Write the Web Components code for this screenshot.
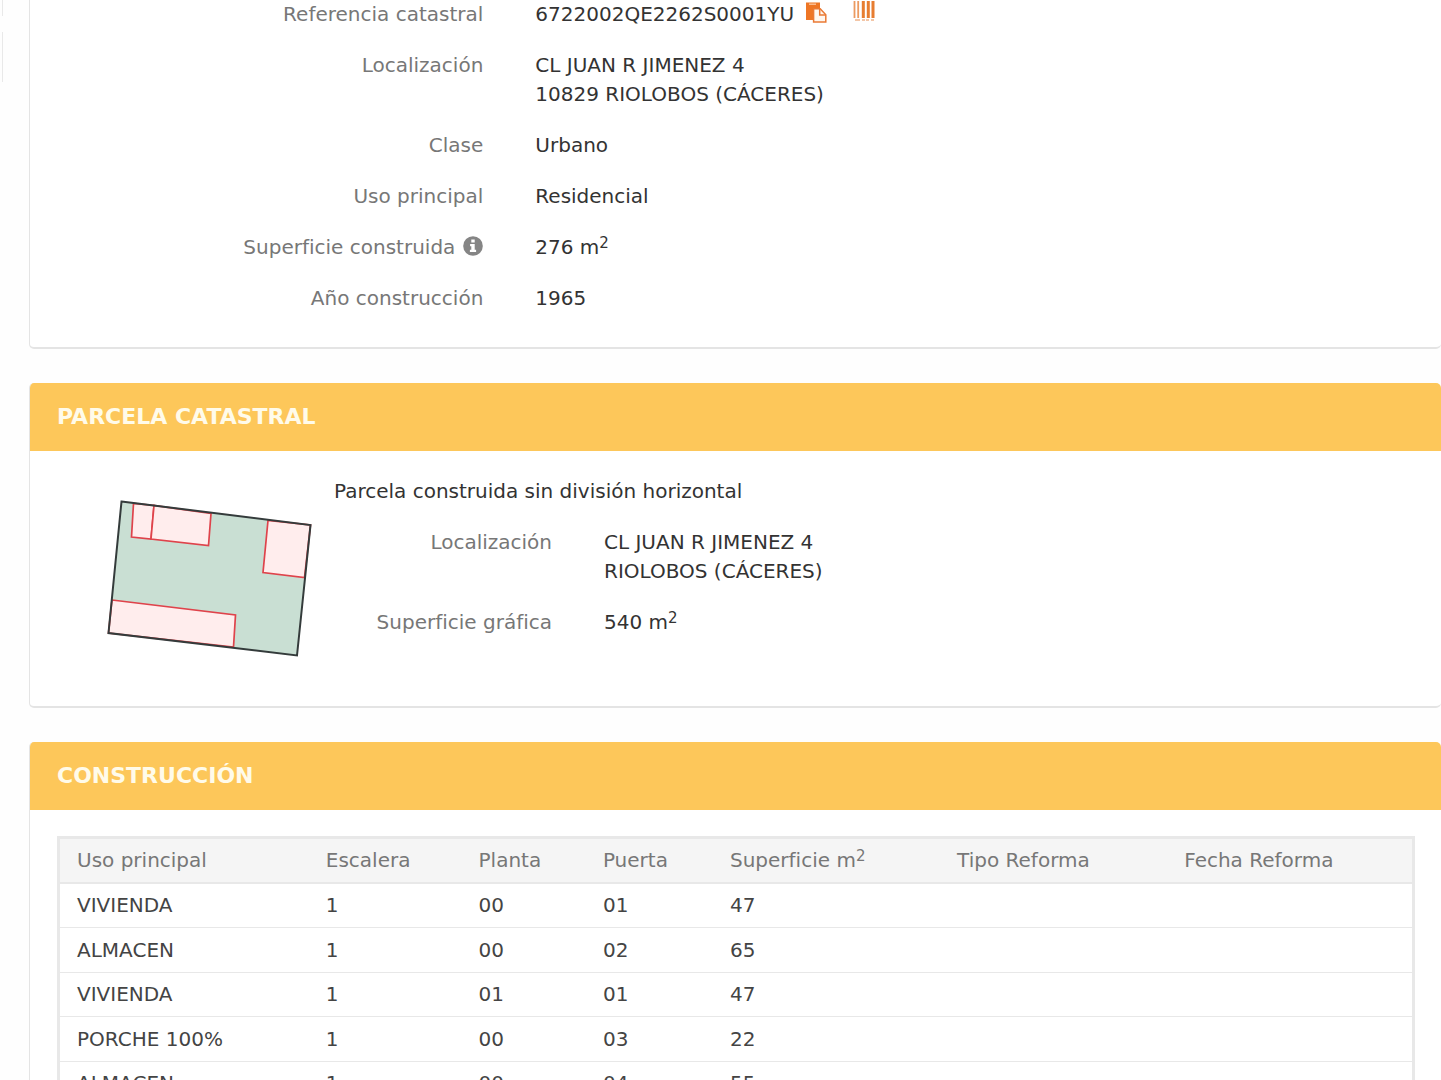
<!DOCTYPE html>
<html lang="es">
<head>
<meta charset="utf-8">
<meta name="viewport" content="width=device-width, initial-scale=1">
<title>Consulta catastral</title>
<style>
  body { margin: 0; background: #fefefe; }
</style>
</head>
<body>
<catastro-page>
  <catastro-card class="summary">
    <data-item label="Referencia catastral">6722002QE2262S0001YU<ref-actions></ref-actions></data-item>
    <data-item label="Localización">CL JUAN R JIMENEZ 4<br>10829 RIOLOBOS (CÁCERES)</data-item>
    <data-item label="Clase">Urbano</data-item>
    <data-item label="Uso principal">Residencial</data-item>
    <data-item label="Superficie construida" info>276 m<super-two></super-two></data-item>
    <data-item label="Año construcción">1965</data-item>
  </catastro-card>
  <catastro-card heading="PARCELA CATASTRAL">
    <parcel-summary>
      <parcel-map slot="map"></parcel-map>
      <span slot="title">Parcela construida sin división horizontal</span>
      <data-item label="Localización">CL JUAN R JIMENEZ 4<br>RIOLOBOS (CÁCERES)</data-item>
      <data-item label="Superficie gráfica">540 m<super-two></super-two></data-item>
    </parcel-summary>
  </catastro-card>
  <catastro-card heading="CONSTRUCCIÓN">
    <construction-table></construction-table>
  </catastro-card>
</catastro-page>

<script>
class Base extends HTMLElement {
  constructor() {
    super();
    this.attachShadow({ mode: 'open' });
  }
  connectedCallback() {
    this.shadowRoot.innerHTML = this.render();
  }
}

customElements.define('catastro-page', class extends Base {
  render() {
    return `<style>
      :host { display: flex; height: 100vh; overflow: hidden; color: #333;
        font: 20px/29px "DejaVu Sans", Verdana, sans-serif; }
      aside { flex: 0 0 29px; display: flex; flex-direction: column; gap: 16px; align-items: flex-start; }
      aside i { width: 2px; height: 16px; border-right: 1px solid #e9e9e9; }
      aside i + i { height: 50px; }
      main { flex: 1; min-width: 0; display: flex; flex-direction: column; gap: 34px; }
      ::slotted(*) { flex: none; }
    </style>
    <aside aria-hidden="true"><i></i><i></i></aside>
    <main><slot></slot></main>`;
  }
});

customElements.define('catastro-card', class extends Base {
  render() {
    const heading = this.getAttribute('heading');
    return `<style>
      :host { display: block; box-sizing: border-box; border: 1px solid #e4e4e4; border-bottom-width: 2px;
        border-right: 0; border-radius: 5px; background: #fff; overflow: hidden; }
      :host([heading]) { border-top: 0; }
      :host(.summary) { border-top: 0; border-radius: 0 0 5px 5px; }
      h2 { margin: 0; padding: 19px 27px 20px; background: #fdc75a; color: #fffbea;
        font-size: 22px; line-height: 29px; font-weight: 700; }
      .body { padding: 26px 26px 26px 27px; }
      :host(.summary) .body { padding: 0 27px 34px; }
    </style>
    ${heading ? `<h2>${heading}</h2>` : ''}
    <div class="body"><slot></slot></div>`;
  }
});

customElements.define('data-item', class extends Base {
  render() {
    const info = this.hasAttribute('info') ? `<svg width="20" height="20" viewBox="0 0 20 20" role="img" aria-label="Información">
      <circle cx="10" cy="10" r="9.8" fill="#858585"/>
      <path d="M8.3 3.5h3.4v2.9H8.3zM7.1 8h4.6v5.800h1.400v2.300H6.900v-2.300h1.400v-3.500H7.100z" fill="#fff"/></svg>` : '';
    return `<style>
      :host { display: block; }
      :host(:not(:last-of-type)) { margin-bottom: 22px; }
      dl { margin: 0; display: grid; grid-template-columns: var(--label-column, 33.333%) 1fr; }
      dt { padding-right: 26px; color: #777; display: flex; justify-content: flex-end; gap: 8px; }
      dd { margin: 0; padding-left: 26px; }
      svg { margin-top: 3px; }
    </style>
    <dl><dt>${this.getAttribute('label')}${info}</dt><dd><slot></slot></dd></dl>`;
  }
});

customElements.define('super-two', class extends Base {
  render() {
    return `<style>
      sup { font-size: 15px; line-height: 0; vertical-align: 6px; }
    </style><sup>2</sup>`;
  }
});

customElements.define('ref-actions', class extends Base {
  render() {
    return `<style>
      :host { display: inline-flex; gap: 26px; margin-left: 11px; vertical-align: top; }
      button { display: block; border: 0; padding: 1px 0 0; background: none; cursor: pointer; }
      svg { display: block; }
    </style>
    <button type="button" aria-label="Copiar referencia catastral"><svg width="22" height="22" viewBox="0 0 22 22">
      <path d="M1 1.500h14v6H8.500v11.500H1z" fill="#ee7625"/>
      <path d="M4 3.200h7" stroke="#fbc39b" stroke-width="1.400"/>
      <path d="M8.600 7.700h6.600l5.600 6v7.200H8.600z" fill="#fff7ef" stroke="#ea7a35" stroke-width="1.500"/>
      <path d="M14.700 8v6h6" fill="none" stroke="#ea7a35" stroke-width="1.500"/></svg></button>
    <button type="button" aria-label="Código de barras"><svg width="22" height="22" viewBox="0 0 22 22">
      <path d="M1.500 0v17M5.200 0v17" stroke="#ec9a60" stroke-width="1.800"/>
      <path d="M10.300 0v17M15.300 0v17M20 0v17" stroke="#e77d31" stroke-width="3"/>
      <path d="M2 19h5M9 19h3M13 19h3M18 19h3" stroke="#efb48b" stroke-width="1.500"/></svg></button>`;
  }
});

customElements.define('parcel-summary', class extends Base {
  render() {
    return `<style>
      :host { display: grid; grid-template-columns: 251px 1fr; min-height: 203px; box-sizing: border-box;
        --label-column: 270px; }
      .map { padding: 22px 0 0 49px; }
      p { margin: 0 0 22px; padding-left: 26px; }
    </style>
    <div class="map"><slot name="map"></slot></div>
    <div><p><slot name="title"></slot></p><slot></slot></div>`;
  }
});

customElements.define('parcel-map', class extends Base {
  render() {
    return `<style>:host, svg { display: block; }</style>
    <svg width="208" height="160" viewBox="106 499 208 160" role="img" aria-label="Plano de la parcela">
      <path d="M121.500 501.500L310.500 525L297 655.500L108.500 633z" fill="#c9dfd3"/>
      <g fill="#ffeded" stroke="#df434b" stroke-width="1.700">
        <path d="M133.500 503.500L131.500 537L151 539L154 505.500z"/>
        <path d="M154 505.500L151 539L208.500 545.500L211 513.500z"/>
        <path d="M268 520.500L263 572.500L304.500 577.500L310.500 525z"/>
        <path d="M112 600L235.500 615L233.500 647L108.500 633z"/>
      </g>
      <path d="M121.500 501.500L310.500 525L297 655.500L108.500 633z" fill="none" stroke="#343b3b" stroke-width="2"/>
    </svg>`;
  }
});

customElements.define('construction-table', class extends Base {
  render() {
    const rows = [
      ['VIVIENDA', '1', '00', '01', '47'],
      ['ALMACEN', '1', '00', '02', '65'],
      ['VIVIENDA', '1', '01', '01', '47'],
      ['PORCHE 100%', '1', '00', '03', '22'],
      ['ALMACEN', '1', '00', '04', '55']
    ];
    return `<style>
      :host { display: block; border: 3px solid #e8e8e8; }
      table { width: 100%; border-collapse: collapse; table-layout: fixed; }
      th, td { padding: 0 17px; text-align: left; font-weight: 400; white-space: nowrap; }
      th { height: 43px; color: #777; background: #f5f5f5; border-bottom: 2px solid #e8e8e8; }
      td { height: 43px; color: #444; border-bottom: 1px solid #e8e8e8; }
      tr:nth-child(even) td { height: 44px; }
      sup { font-size: 15px; line-height: 0; vertical-align: 6px; }
    </style>
    <table>
      <colgroup><col style="width:18.4%"><col style="width:11.3%"><col style="width:9.2%"><col style="width:9.4%"><col style="width:16.8%"><col style="width:16.8%"><col></colgroup>
      <thead><tr><th>Uso principal</th><th>Escalera</th><th>Planta</th><th>Puerta</th><th>Superficie m<sup>2</sup></th><th>Tipo Reforma</th><th>Fecha Reforma</th></tr></thead>
      <tbody>${rows.map(r => `<tr>${r.map(c => `<td>${c}</td>`).join('')}<td></td><td></td></tr>`).join('')}</tbody>
    </table>`;
  }
});
</script>
</body>
</html>
